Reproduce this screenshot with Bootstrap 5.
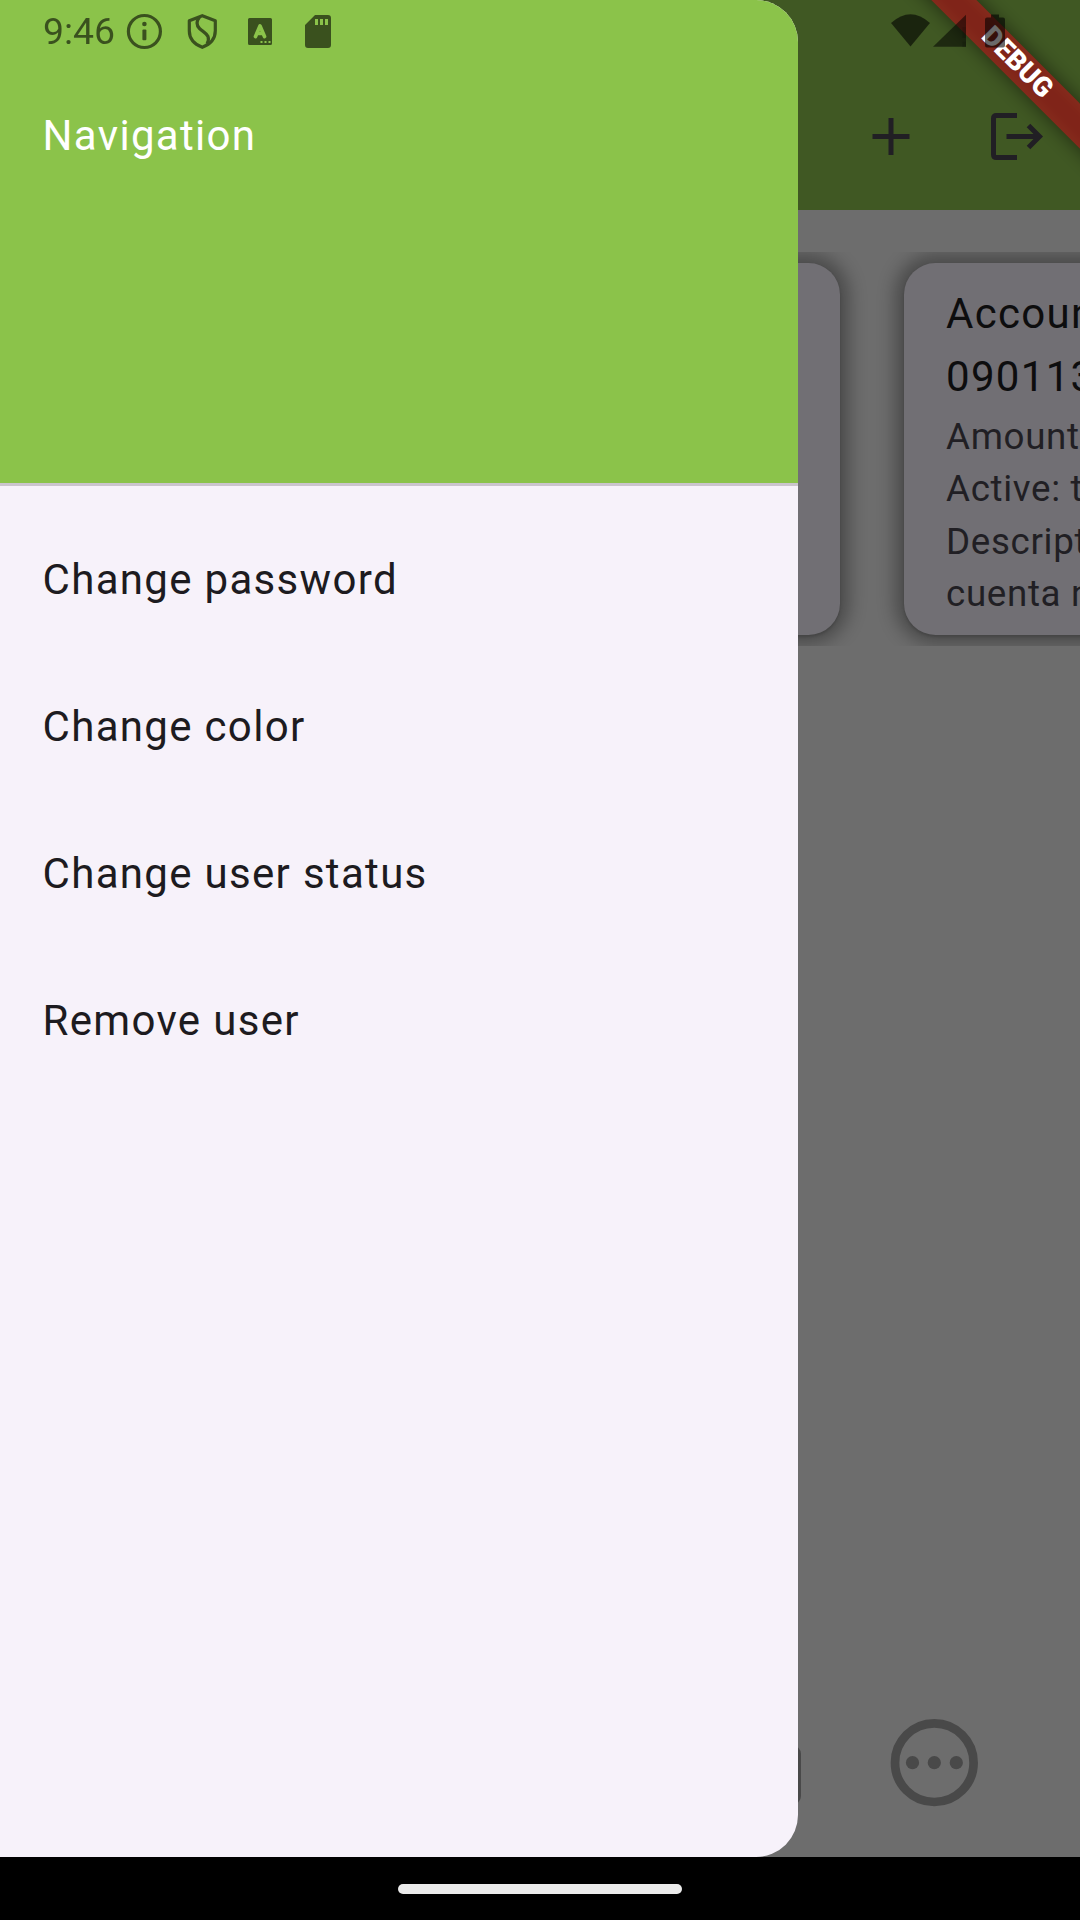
<!DOCTYPE html>
<html lang="en">
<head>
<meta charset="utf-8">
<meta name="viewport" content="width=device-width, initial-scale=1">
<title>Navigation</title>
<link href="https://cdn.jsdelivr.net/npm/bootstrap@5.3.0/dist/css/bootstrap.min.css" rel="stylesheet">
<style>
  body { margin: 0; background: #000; font-family: Roboto, sans-serif; overflow: hidden; }
  svg { display: block; flex: none; overflow: visible; }
  .phone { width: 1080px; height: 1920px; }
  .app-screen { height: 1857px; background: #6d6d6d; }
  .app-top { height: 210px; background: #405823; padding: 63px 36px 0 0; color: #211f24; gap: 80px; }
  .account-strip { margin-top: 42px; height: 394px; padding: 11px 0 11px 105px; gap: 64px; }
  .account-tile { flex: 0 0 735px; height: 372px; border-radius: 31.5px; background: #716f74; border: 0;
    padding: 19px 42px 0; color: #211f24; white-space: nowrap;
    box-shadow: 0 2px 3px rgba(0,0,0,.15), 0 0 18px 9px rgba(0,0,0,.32); }
  .account-title { font-size: 42px; line-height: 63px; letter-spacing: 1.3125px; color: #0d0d0e; margin-bottom: 2.6px; }
  .account-info { font-size: 36.75px; line-height: 52.5px; letter-spacing: .66px; }
  .bottom-tabs { height: 189px; padding-right: 102px; gap: 89px; color: #494949; }
  .drawer { width: 798px; height: 1857px; border-radius: 0 42px 42px 0; background: #f7f2fa; z-index: 2; }
  .drawer-head { height: 486px; background: #8bc34a; border-bottom: 3px solid #cbc5cd; color: #fff; padding: 104px 42.6px 0; }
  .drawer-text { font-size: 42px; line-height: 63px; letter-spacing: 1.3125px; }
  .drawer-list { padding-top: 20px; }
  .drawer-list .list-group-item { height: 147px; padding: 0 42.6px; color: #1d1b20; background: transparent; border: 0; }
  .debug-corner { width: 240px; height: 240px; z-index: 3; }
  .ribbon-shade, .ribbon-band { width: 300px; height: 31.5px; left: 27.1px; top: 46.7px; transform: rotate(45deg); }
  .ribbon-shade { background: rgba(0,0,0,.5); filter: blur(9.6px); }
  .ribbon-band { background: rgba(183,28,28,.627); color: #fff; font-size: 27.4px; line-height: 31.5px; font-weight: 900; }
  .status { height: 63px; width: 1080px; z-index: 4; color: #000; opacity: .58; padding: 0 75px 0 43px; }
  .clock { font-size: 37.4px; line-height: 63px; width: 83px; }
  .gesture { height: 63px; background: #000; padding-top: 27px; }
  .gesture-pill { width: 284px; height: 10px; border-radius: 5px; background: #ebebeb; }
</style>
</head>
<body>
<div class="phone position-relative overflow-hidden">
  <div class="app-screen d-flex flex-column">
    <header class="app-top d-flex justify-content-end">
      <svg width="38" height="147" viewBox="872 63 38 147" fill="none" stroke="currentColor" stroke-width="5"><path d="M872.5 136.5h37M891 118v37"/></svg>
      <svg width="54" height="147" viewBox="990 63 54 147" fill="none" stroke="currentColor" stroke-width="5"><path d="M1017 115.500h-20.500q-3 0-3 3v36q0 3 3 3h20.500M1006.500 136.500h33M1028.500 125.500l11 11-11 11"/></svg>
    </header>
    <section class="account-strip d-flex overflow-hidden">
      <div class="card account-tile"></div>
      <div class="card account-tile">
        <div class="account-title">Account:<br>0901134</div>
        <div class="account-info">Amount: 0<br>Active: true<br>Description:<br>cuenta nueva</div>
      </div>
    </section>
    <nav class="bottom-tabs d-flex justify-content-end align-items-center mt-auto">
      <svg width="88" height="88" viewBox="758 1718 88 88" fill="currentColor"><rect x="760" y="1744" width="86" height="60" rx="9"/></svg>
      <svg width="88" height="88" viewBox="0 0 88 88" fill="currentColor"><circle cx="44.300" cy="43.700" r="39.300" fill="none" stroke="currentColor" stroke-width="8.700"/><circle cx="22.500" cy="43.700" r="6.600"/><circle cx="44.300" cy="43.700" r="6.600"/><circle cx="66.300" cy="43.700" r="6.600"/></svg>
    </nav>
  </div>

  <aside class="drawer position-absolute top-0 start-0 overflow-hidden">
    <div class="drawer-head drawer-text">Navigation</div>
    <div class="drawer-list list-group list-group-flush drawer-text">
      <div class="list-group-item d-flex align-items-center">Change password</div>
      <div class="list-group-item d-flex align-items-center">Change color</div>
      <div class="list-group-item d-flex align-items-center">Change user status</div>
      <div class="list-group-item d-flex align-items-center">Remove user</div>
    </div>
  </aside>

  <div class="debug-corner position-absolute top-0 end-0 overflow-hidden">
    <div class="ribbon-shade position-absolute"></div>
    <div class="ribbon-band position-absolute text-center">DEBUG</div>
  </div>

  <div class="status position-absolute top-0 start-0 d-flex">
    <div class="clock">9:46</div>
    <svg width="179" height="63" viewBox="126 0 179 63">
      <circle cx="144.400" cy="31.500" r="16" fill="none" stroke="currentColor" stroke-width="3.200"/>
      <circle cx="144.400" cy="24" r="2.300"/><rect x="142.400" y="29.500" width="4" height="10.800" rx="1"/>
      <g fill="none" stroke="currentColor" stroke-width="3.200" stroke-linejoin="round"><path d="M202.300 15.700l-13 5v10c0 8 5 13.500 13 16.600 8-3.100 13-8.600 13-16.600v-10z"/><path d="M199.500 17c-3 4-3.500 8 0 11.500 3 3 7 4.500 8.500 8 1 2.500.3 5-1 7.500"/></g>
      <path fill-rule="evenodd" d="M249.500 18h21q1.500 0 1.500 1.500v24q0 1.500-1.500 1.500h-21q-1.500 0-1.500-1.500v-24q0-1.500 1.500-1.500zM260.500 41v2h2v-2zm4 0v2h2v-2zm4 0v2h2v-2z"/>
      <path d="M255.500 36.500l4.500-10.500 4.500 10.500M257.500 33.500h5" fill="none" stroke="#8bc34a" stroke-width="3.700" stroke-linecap="round" stroke-linejoin="round"/>
    </svg>
    <svg width="27" height="63" viewBox="305 0 27 63"><path fill-rule="evenodd" d="M315 15h13q3 0 3 3v27q0 3-3 3h-20q-3 0-3-3v-20zM315 19v6h3v-6zm5 0v6h3v-6zm5 0v6h3v-6z"/></svg>
    <svg class="ms-auto" width="115" height="63" viewBox="890 0 115 63">
      <path d="M891 23q19.500-17.500 39 0l-19.500 23.500z"/>
      <path d="M933 46.800l33-32v32z" fill-opacity=".9"/><path d="M962.300 27h3.700v11h-3.700zM962.300 41.500h3.700v5h-3.700z"/>
      <path d="M991 14.500h8v3h4q2 0 2 2v26q0 2-2 2h-16q-2 0-2-2v-26q0-2 2-2h4z"/>
    </svg>
  </div>

  <footer class="gesture d-flex justify-content-center"><div class="gesture-pill"></div></footer>
</div>
<script src="https://cdn.jsdelivr.net/npm/bootstrap@5.3.0/dist/js/bootstrap.bundle.min.js"></script>
</body>
</html>
